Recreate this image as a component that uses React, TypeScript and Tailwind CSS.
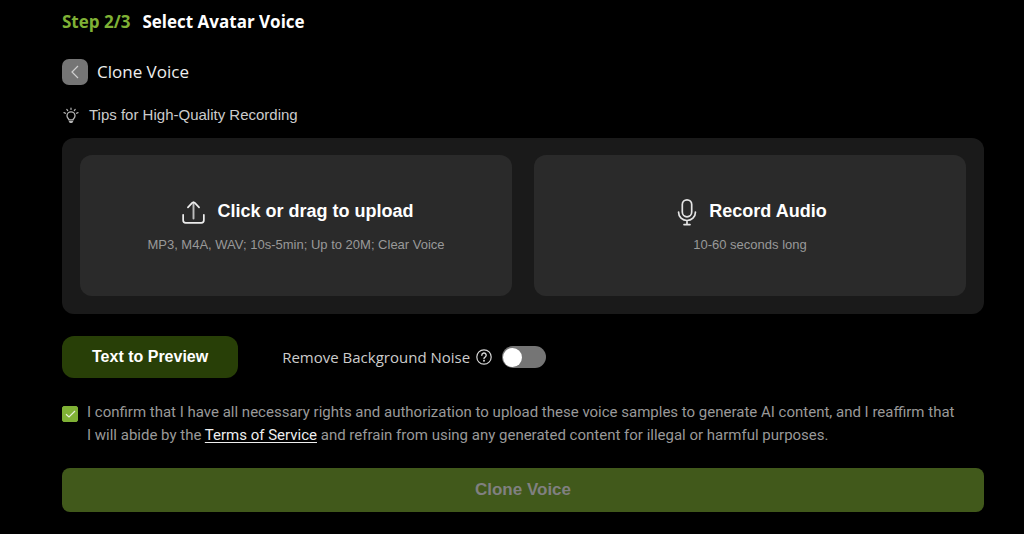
import { useState } from "react";
import type { ReactNode } from "react";

function BulbIcon() {
  return (
    <svg width="16" height="16" viewBox="0 0 16 16" fill="none" stroke="#b5b5b5" strokeLinecap="round" aria-hidden="true">
      <path d="M6 12.8c0-.9-2-1.6-2-4a4 4 0 0 1 8 0c0 2.4-2 3.1-2 4z" strokeWidth="1.3" />
      <path d="M6.4 14.6h3.2M7.2 15.4h1.6" strokeWidth="1.3" />
      <path d="M8 1v1.4M3.8 2.4l.9 1.2M12.2 2.4l-.9 1.2M1 5.6l1.5.7M15 5.6l-1.5.7" strokeWidth="1.2" />
    </svg>
  );
}

function UploadIcon() {
  return (
    <svg width="23" height="23" viewBox="0 0 24 24" fill="none" stroke="#ececec" strokeWidth="1.8" strokeLinecap="round" strokeLinejoin="round" aria-hidden="true">
      <path d="M12 18.2V1.6" stroke="#bcbcbc" strokeWidth="2" />
      <path d="M6.2 6.6 10.6 2q1.4-1.2 2.8 0l4.4 4.6" />
      <path d="M1.2 14.4v5.8q0 2.6 2.6 2.6h16.4q2.6 0 2.6-2.6v-5.8" />
    </svg>
  );
}

function MicIcon() {
  return (
    <svg width="20" height="28" viewBox="0 0 20 28" fill="none" stroke="#e4e4e4" strokeWidth="1.7" strokeLinecap="round" aria-hidden="true">
      <rect x="5.3" y="1.8" width="9.4" height="17" rx="4.7" />
      <path d="M1.6 14v.5a8.4 8 0 0 0 16.8 0V14M10 22.5v3.7M7 26.6h6" />
    </svg>
  );
}

type SourceCardProps = {
  icon: ReactNode;
  title: string;
  hint: string;
};

function SourceCard({ icon, title, hint }: SourceCardProps) {
  return (
    <button
      type="button"
      className="flex flex-1 flex-col items-center rounded-xl bg-[#2a2a2a] pt-[43px] pb-[41px]"
    >
      <span className="flex h-7 items-center gap-3 pl-1">
        {icon}
        <span className="pb-0.5 text-[18px] leading-6 font-bold text-white">{title}</span>
      </span>
      <span className="mt-[9px] text-[13px] leading-5 text-[#999]">{hint}</span>
    </button>
  );
}

export default function App() {
  const [removeNoise, setRemoveNoise] = useState(false);
  const [confirmed, setConfirmed] = useState(true);

  return (
    <div className="min-h-screen bg-black pt-[10px] pr-10 pb-[22px] pl-[62px] font-['Liberation_Sans',Arial,sans-serif]">
      <h1 className="flex gap-3 font-['Open_Sans',sans-serif] text-[17px] leading-6 font-bold text-white">
        <span className="text-[#7fb135]">Step 2/3</span>
        <span>Select Avatar Voice</span>
      </h1>

      <div className="mt-[25px] flex items-center gap-[9px]">
        <button
          type="button"
          aria-label="Back"
          className="flex size-[26px] items-center justify-center rounded-[7px] bg-[#757575]"
        >
          <svg width="8" height="14" viewBox="0 0 8 14" fill="none" stroke="#d0d0d0" strokeWidth="1.2" aria-hidden="true">
            <path d="M7 1 1 7l6 6" />
          </svg>
        </button>
        <h2 className="font-['Open_Sans',sans-serif] text-[17px] leading-6 text-[#eee]">Clone Voice</h2>
      </div>

      <div className="mt-5 flex items-center gap-[10px] pl-px text-[15px] leading-5 text-[#ccc]">
        <BulbIcon />
        Tips for High-Quality Recording
      </div>

      <div className="mt-[13px] flex gap-[22px] rounded-xl bg-[#1a1a1a] px-[18px] pt-[17px] pb-[18px]">
        <SourceCard
          icon={<UploadIcon />}
          title="Click or drag to upload"
          hint="MP3, M4A, WAV; 10s-5min; Up to 20M; Clear Voice"
        />
        <SourceCard icon={<MicIcon />} title="Record Audio" hint="10-60 seconds long" />
      </div>

      <div className="mt-[22px] flex items-center">
        <button
          type="button"
          className="h-[42px] rounded-xl bg-[#283f07] px-[30px] text-[16px] font-bold text-white"
        >
          Text to Preview
        </button>
        <label
          htmlFor="remove-noise"
          className="ml-11 font-['Open_Sans',sans-serif] text-[15px] leading-6 text-[#ccc]"
        >
          Remove Background Noise
        </label>
        <button type="button" aria-label="About noise removal" className="ml-1.5">
          <svg width="16" height="16" viewBox="0 0 16 16" fill="none" stroke="#d5d5d5" strokeWidth="1.2" strokeLinecap="round" aria-hidden="true">
            <circle cx="8" cy="8" r="7.2" />
            <path d="M5.8 6.2a2.2 2.2 0 1 1 3.3 1.9Q8 8.7 8 9.6" strokeWidth="1.4" />
            <circle cx="8" cy="11.7" r=".4" fill="#d5d5d5" />
          </svg>
        </button>
        <input
          id="remove-noise"
          type="checkbox"
          role="switch"
          checked={removeNoise}
          onChange={(e) => setRemoveNoise(e.target.checked)}
          className="ml-[10px] flex h-[22px] w-11 appearance-none items-center rounded-full bg-[#757575] px-px before:size-[19px] before:rounded-full before:bg-white checked:justify-end checked:bg-[#7fb135]"
        />
      </div>

      <div className="mt-[23px] flex items-start gap-[9px]">
        <span className="mt-[5px] grid size-4 shrink-0">
          <input
            id="confirm"
            type="checkbox"
            checked={confirmed}
            onChange={(e) => setConfirmed(e.target.checked)}
            className="peer col-start-1 row-start-1 size-4 appearance-none rounded-xs border border-[#7fb135] checked:bg-[#7fb135]"
          />
          <svg
            viewBox="0 0 16 16"
            fill="none"
            stroke="#e5efd8"
            strokeWidth="1.2"
            aria-hidden="true"
            className="pointer-events-none invisible col-start-1 row-start-1 size-4 peer-checked:visible"
          >
            <path d="m4 8.2 3 2.8 6-6" />
          </svg>
        </span>
        <label
          htmlFor="confirm"
          className="pr-3 font-['Roboto',sans-serif] text-[15px] leading-[23px] text-[#999]"
        >
          I confirm that I have all necessary rights and authorization to upload these voice samples to generate AI
          content, and I reaffirm that I&nbsp;will abide by the{" "}
          <a href="#terms" className="text-[#eee] underline underline-offset-2">
            Terms of Service
          </a>{" "}
          and refrain from using any generated content for illegal or harmful purposes.
        </label>
      </div>

      <button
        type="button"
        disabled
        className="mt-[21px] h-11 w-full rounded-lg bg-[#41591b] text-[17px] font-bold text-[#808080]"
      >
        Clone Voice
      </button>
    </div>
  );
}
